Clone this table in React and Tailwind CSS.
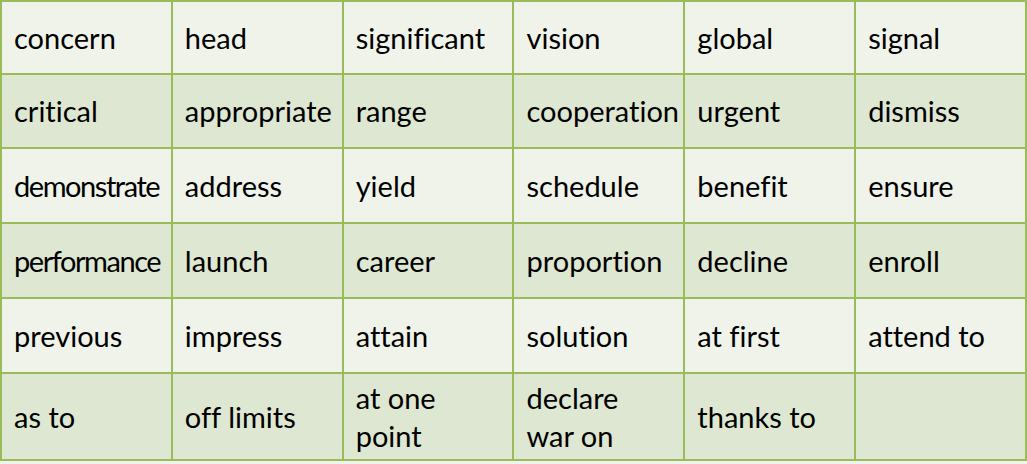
import React from 'react';

const rows = [
  ['concern', 'head', 'significant', 'vision', 'global', 'signal'],
  ['critical', 'appropriate', 'range', 'cooperation', 'urgent', 'dismiss'],
  ['demonstrate', 'address', 'yield', 'schedule', 'benefit', 'ensure'],
  ['performance', 'launch', 'career', 'proportion', 'decline', 'enroll'],
  ['previous', 'impress', 'attain', 'solution', 'at first', 'attend to'],
  ['as to', 'off limits', ['at one', 'point'], ['declare', 'war on'], 'thanks to', ''],
];

// words that are squeezed to fit their cell
const tight = ['demonstrate', 'performance'];

function Cell({ word, dark }) {
  return (
    <div
      className={
        'flex items-center pl-[12px] pr-1 text-[29px] leading-[38px] text-black ' +
        (dark ? 'bg-[#dee7d1]' : 'bg-[#eff3ea]')
      }
    >
      {Array.isArray(word) ? (
        <span>
          {word[0]}
          <br />
          {word[1]}
        </span>
      ) : (
        <span className={tight.includes(word) ? 'tracking-[-0.05em]' : ''}>{word}</span>
      )}
    </div>
  );
}

function App() {
  return (
    <div className="w-[1027px] h-[464px] bg-[#eff3ea] font-['Lato',sans-serif] [font-variant-ligatures:none]">
      <div className="grid grid-cols-6 grid-rows-[71px_72px_73px_73px_73px_85px] gap-[2px] p-[2px] bg-[#9bbb59] w-[1027px]">
        {rows.map((row, r) =>
          row.map((word, c) => <Cell key={r + '-' + c} word={word} dark={r % 2 === 1} />)
        )}
      </div>
    </div>
  );
}

export default App;
